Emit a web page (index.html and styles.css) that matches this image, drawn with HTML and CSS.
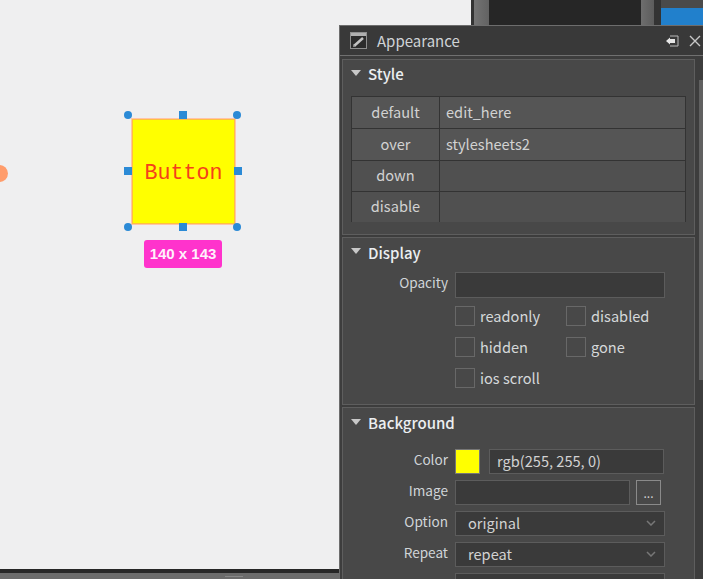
FILE: index.html
```html
<!DOCTYPE html>
<html lang="en">
<head>
    <meta charset="UTF-8">
    <meta name="viewport" content="width=device-width, initial-scale=1.0">
    <title>Appearance</title>
    <link rel="stylesheet" href="styles.css">
</head>
<body>

    <div class="desktop">
        <!-- windows behind the panel -->
        <div class="back-window">
            <div class="back-dark"></div>
            <div class="back-grey"></div>
            <div class="back-tabs"><div class="back-blue"></div></div>
        </div>
        <div class="bottom-bar"><div class="bottom-handle"></div></div>

        <!-- canvas -->
        <div class="anchor"></div>
        <div class="widget">Button</div>
        <div class="handle round h-tl"></div>
        <div class="handle h-tc"></div>
        <div class="handle round h-tr"></div>
        <div class="handle h-ml"></div>
        <div class="handle h-mr"></div>
        <div class="handle round h-bl"></div>
        <div class="handle h-bc"></div>
        <div class="handle round h-br"></div>
        <div class="size-badge">140 x 143</div>

        <!-- appearance panel -->
        <div class="panel">
            <div class="panel-title">
                <svg class="title-icon" width="17" height="17" viewBox="0 0 17 17">
                    <rect x="0.5" y="0.5" width="16" height="16" fill="#2c2c2c" stroke="#8f8f8f"/>
                    <rect x="1" y="1" width="15" height="3" fill="#b0b0b0"/>
                    <path d="M4 14 L13 6" stroke="#c4c4c4" stroke-width="2.4" fill="none"/>
                    <path d="M3 15 H6 L3 12 Z" fill="#8a8a8a"/>
                </svg>
                <span class="title-text">Appearance</span>
                <svg class="dock-icon" width="14" height="12" viewBox="0 0 14 12">
                    <path d="M5 1 H13 V11 H5" fill="none" stroke="#bbb"/>
                    <path d="M1 6 L5 2.5 V4 H10 V8 H5 V9.5 Z" fill="#e6e6e6"/>
                </svg>
                <svg class="close-icon" width="12" height="12" viewBox="0 0 12 12">
                    <path d="M1 1 L11 11 M11 1 L1 11" stroke="#c8c8c8" stroke-width="1.4"/>
                </svg>
            </div>

            <div class="scrollbar"></div>

            <section class="group group-style">
                <h3 class="group-head">Style</h3>
                <div class="state-table">
                    <div class="state-row tall"><div class="state-name">default</div><div class="state-value">edit_here</div></div>
                    <div class="state-row tall"><div class="state-name">over</div><div class="state-value">stylesheets2</div></div>
                    <div class="state-row"><div class="state-name">down</div><div class="state-value"></div></div>
                    <div class="state-row"><div class="state-name">disable</div><div class="state-value"></div></div>
                </div>
            </section>

            <section class="group group-display">
                <h3 class="group-head">Display</h3>
                <div class="form-row opacity-row">
                    <span class="form-label">Opacity</span>
                    <div class="field opacity-field"></div>
                </div>
                <div class="check-grid">
                    <label class="check"><span class="box"></span>readonly</label>
                    <label class="check"><span class="box"></span>disabled</label>
                    <label class="check"><span class="box"></span>hidden</label>
                    <label class="check"><span class="box"></span>gone</label>
                    <label class="check"><span class="box"></span>ios scroll</label>
                </div>
            </section>

            <section class="group group-background">
                <h3 class="group-head">Background</h3>
                <div class="form-row">
                    <span class="form-label">Color</span>
                    <div class="swatch"></div>
                    <div class="field color-field">rgb(255, 255, 0)</div>
                </div>
                <div class="form-row">
                    <span class="form-label">Image</span>
                    <div class="field image-field"></div>
                    <div class="more-btn">...</div>
                </div>
                <div class="form-row">
                    <span class="form-label">Option</span>
                    <div class="field select-field">original
                        <svg width="10" height="6" viewBox="0 0 10 6"><path d="M1 1 L5 5 L9 1" fill="none" stroke="#777" stroke-width="1.5"/></svg>
                    </div>
                </div>
                <div class="form-row">
                    <span class="form-label">Repeat</span>
                    <div class="field select-field">repeat
                        <svg width="10" height="6" viewBox="0 0 10 6"><path d="M1 1 L5 5 L9 1" fill="none" stroke="#777" stroke-width="1.5"/></svg>
                    </div>
                </div>
                <div class="form-row">
                    <span class="form-label"></span>
                    <div class="field select-field"></div>
                </div>
            </section>
        </div>
    </div>

</body>
</html>
```

FILE: styles.css
```css
body {
    margin: 0;
    font-family: "Noto Sans CJK KR", "Noto Sans", sans-serif;
    overflow: hidden;
}

.desktop {
    position: relative;
    width: 703px;
    height: 579px;
    overflow: hidden;
    background: #efeff0;
}

/* things behind the panel */
.back-window {
    position: absolute;
    left: 471px;
    top: 0;
    width: 232px;
    height: 26px;
    display: flex;
    background: #333;
}

.back-dark {
    width: 152px;
    margin-left: 18px;
    background: #262626;
}

.back-grey {
    width: 13px;
    background: linear-gradient(90deg, #6e6e6e, #5c5c5c);
}

.back-tabs {
    flex: 1;
    margin-left: 7px;
    padding-top: 8px;
    background: #4a4a4a;
}

.back-blue {
    height: 18px;
    background: #2180cc;
}

.back-window::before {
    content: "";
    position: absolute;
    left: 3px;
    top: 0;
    width: 15px;
    height: 26px;
    background: linear-gradient(90deg, #747474, #626262);
}

.bottom-bar {
    position: absolute;
    left: 0;
    right: 0;
    top: 569px;
    height: 10px;
    background: #6b6b6b;
    border-top: 4px solid #262626;
    box-sizing: border-box;
}

.bottom-handle {
    width: 18px;
    height: 1px;
    margin: 3px 0 0 225px;
    background: #888;
}

/* canvas */
.anchor {
    position: absolute;
    left: -9px;
    top: 165px;
    width: 17px;
    height: 17px;
    border-radius: 50%;
    background: #ff9c6b;
}

.widget {
    position: absolute;
    left: 131px;
    top: 118px;
    width: 105px;
    height: 107px;
    box-sizing: border-box;
    display: flex;
    align-items: center;
    justify-content: center;
    background: #ffff00;
    border: 1px solid #ffc4a8;
    box-shadow: inset 0 0 0 1px #ffc040;
    color: #f5401a;
    font-family: "Liberation Mono", monospace;
    font-size: 21.6px;
    padding-top: 2px;
}

.handle {
    position: absolute;
    width: 8px;
    height: 8px;
    background: #2b8ad6;
}

.handle.round {
    border-radius: 50%;
}

.h-tl { left: 124px; top: 111px; }
.h-tc { left: 179px; top: 111px; }
.h-tr { left: 233px; top: 111px; }
.h-ml { left: 124px; top: 167px; }
.h-mr { left: 234px; top: 167px; }
.h-bl { left: 124px; top: 223px; }
.h-bc { left: 179px; top: 223px; }
.h-br { left: 233px; top: 223px; }

.size-badge {
    position: absolute;
    left: 144px;
    top: 240px;
    width: 78px;
    height: 28px;
    border-radius: 3px;
    background: #ff33cc;
    color: #fff0fb;
    font-family: "Liberation Sans", sans-serif;
    font-weight: bold;
    font-size: 15px;
    line-height: 28px;
    text-align: center;
}

/* panel */
.panel {
    position: absolute;
    left: 339px;
    top: 25px;
    width: 364px;
    height: 554px;
    box-sizing: border-box;
    background: #3d3d3d;
    border-top: 1px solid #6d6d6d;
    border-left: 1px solid #6d6d6d;
    color: #d2d2d2;
    font-size: 14.6px;
    overflow: hidden;
}

.panel-title {
    display: flex;
    align-items: center;
    height: 29px;
    padding: 0 2px 0 10px;
    background: #393939;
    border-bottom: 1px solid #707070;
    margin-bottom: 3px;
}

.title-icon {
    margin-right: 10px;
}

.title-text {
    flex: 1;
    font-size: 15px;
    line-height: 26px;
    color: #cfd3d6;
}

.dock-icon {
    margin-right: 10px;
}

.scrollbar {
    position: absolute;
    right: 0;
    top: 54px;
    width: 4px;
    height: 300px;
    background: #606060;
}

.group {
    box-sizing: border-box;
    width: 353px;
    margin: 0 0 2px 2px;
    background: #484848;
    border: 1px solid #5e5e5e;
}

.group-style { height: 176px; }
.group-display { height: 168px; margin-bottom: 2px; }
.group-background { height: 200px; }

.group-head {
    margin: 0;
    height: 28px;
    padding-left: 25px;
    position: relative;
    font-size: 15px;
    line-height: 27px;
    font-weight: 500;
    color: #eceff1;
}

.group-display .group-head {
    line-height: 29px;
}

.group-head::before {
    content: "";
    position: absolute;
    left: 8px;
    top: 10px;
    border-left: 5px solid transparent;
    border-right: 5px solid transparent;
    border-top: 6px solid #c8c8c8;
}

/* style table */
.state-table {
    margin: 8px 0 0 8px;
    width: 335px;
    height: 126px;
    border: 1px solid #333;
    box-sizing: border-box;
}

.state-row {
    display: flex;
    height: 31px;
    border-bottom: 1px solid #333;
    box-sizing: border-box;
    background: #505050;
    line-height: 27px;
}

.state-row.tall {
    height: 32px;
    background: #555;
    line-height: 30px;
}

.state-row:last-child {
    height: 30px;
    border-bottom: 0;
}

.state-name {
    width: 87px;
    text-align: center;
    border-right: 1px solid #333;
    color: #d2d2d2;
}

.state-value {
    flex: 1;
    padding-left: 6px;
}

/* forms */
.form-row {
    display: flex;
    align-items: center;
    height: 25px;
    margin-bottom: 6px;
}

.form-label {
    width: 105px;
    margin-right: 7px;
    padding-bottom: 6px;
    text-align: right;
    font-size: 13.6px;
    line-height: 22px;
    color: #d0d5d8;
}

.group-display .form-row {
    margin-top: 6px;
    height: 26px;
    margin-bottom: 2px;
}

.group-background .group-head {
    height: 41px;
    line-height: 29px;
}

.group-background .group-head::before {
    top: 11px;
}

.field {
    box-sizing: border-box;
    height: 100%;
    background: #3a3a3a;
    border: 1px solid #5c5c5c;
    line-height: 22px;
    font-size: 14.6px;
}

.opacity-field {
    width: 210px;
}

.swatch {
    box-sizing: border-box;
    width: 25px;
    height: 25px;
    margin-right: 9px;
    background: #ffff00;
    border: 1px solid #777;
}

.color-field {
    width: 175px;
    padding-left: 7px;
}

.image-field {
    width: 175px;
    margin-right: 6px;
}

.more-btn {
    box-sizing: border-box;
    width: 25px;
    height: 25px;
    border: 1px solid #8a8a8a;
    text-align: center;
    font-size: 12px;
    line-height: 24px;
}

.select-field {
    width: 210px;
    padding: 0 8px 2px 12px;
    display: flex;
    align-items: center;
    justify-content: space-between;
}

.check-grid {
    display: grid;
    grid-template-columns: 111px 1fr;
    grid-auto-rows: 31px;
    margin-left: 112px;
}

.check {
    display: flex;
    align-items: center;
    font-size: 14.6px;
    color: #d5d8da;
}

.box {
    box-sizing: border-box;
    width: 20px;
    height: 20px;
    margin-right: 5px;
    border: 1px solid #686868;
}
```
